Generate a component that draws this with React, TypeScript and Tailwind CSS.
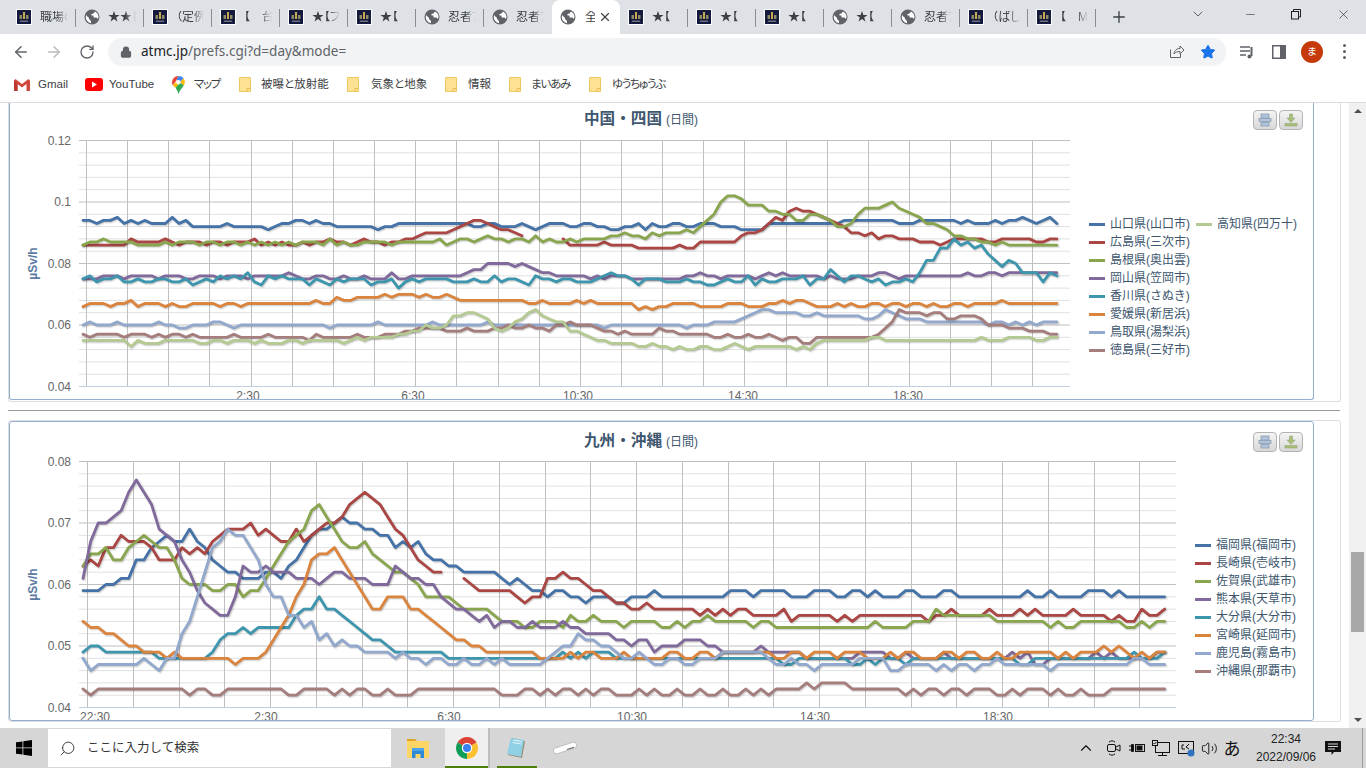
import {
  ArrowLeft,
  ArrowRight,
  RotateCw,
  Lock,
  Star,
  Minus,
  X,
  Plus,
  ChevronDown,
  ChevronUp,
  Search,
  Volume2,
} from 'lucide-react'

const colors = ['#4572A7', '#AA4643', '#89A54E', '#80699B', '#3D96AE', '#DB843D', '#92A8CD', '#A47D7C', '#B5CA92']

// values are in 0.001 uSv/h, one per 10 minutes from 22:30, 0 = no data
const shikoku = [
  [
    94,94,93,94,94,95,93,94,93,94,93,93,93,95,93,94,92,92,92,92,
    92,93,92,92,92,92,92,91,92,93,93,94,94,93,94,93,93,92,92,92,
    92,92,92,91,92,92,93,93,93,93,93,93,93,93,93,93,93,92,92,93,
    93,92,92,92,93,92,91,92,93,93,93,92,92,93,93,92,92,91,91,92,
    92,93,91,93,92,92,93,93,92,92,93,93,93,92,92,92,91,91,91,91,
    93,93,93,93,93,93,93,93,93,93,93,94,94,94,94,94,94,94,94,93,
    93,93,94,94,94,94,94,94,93,94,93,93,93,94,93,94,94,95,94,93,94,95,93,
  ],
  [
    86,86,86,86,86,86,86,88,87,87,87,87,88,87,86,87,87,87,86,87,
    87,86,87,87,87,88,86,87,86,87,86,86,87,86,87,87,88,87,87,86,
    87,88,87,87,86,87,87,88,88,89,90,90,90,90,91,92,93,94,94,93,
    92,91,91,90,89,0,0,0,0,0,88,86,86,86,86,86,87,86,86,86,
    86,85,85,85,85,85,85,86,85,85,87,87,87,87,87,87,89,90,90,91,
    93,95,94,97,98,97,97,96,95,94,93,92,90,90,89,90,88,89,89,88,
    88,88,87,87,87,86,87,88,88,88,88,88,87,87,88,88,88,88,88,87,87,88,88,
  ],
  [
    86,87,87,88,87,87,87,87,86,86,86,86,87,86,87,87,87,86,87,87,
    86,87,87,86,87,86,87,86,87,86,87,86,87,87,87,86,88,86,87,86,
    86,87,87,87,87,86,87,87,87,87,87,87,88,86,87,88,88,87,88,89,
    88,88,87,88,88,87,89,87,88,87,87,88,87,88,88,88,88,89,89,90,
    89,89,88,90,89,90,90,90,91,90,92,94,96,100,102,102,101,99,99,99,
    97,97,96,96,94,94,96,96,95,94,92,92,93,96,98,98,98,99,100,98,
    97,96,95,93,93,92,91,89,89,88,88,87,87,86,87,86,86,86,86,86,86,86,86,
  ],
  [
    75,75,75,76,76,76,75,76,76,76,76,75,76,76,76,75,75,76,76,76,
    75,76,76,76,75,76,76,76,76,76,77,76,75,75,76,76,75,75,76,75,
    75,76,75,75,75,77,75,75,76,76,76,76,76,76,76,76,77,78,78,80,
    80,80,80,79,80,79,78,77,77,76,76,76,76,76,75,76,75,76,76,76,
    75,75,75,75,75,75,75,75,76,76,77,76,76,75,76,76,76,76,75,76,
    77,76,77,76,76,76,76,76,75,76,75,75,75,76,76,76,77,77,76,75,
    76,76,76,76,76,76,76,76,76,77,76,76,77,77,76,77,77,77,77,77,77,77,77,
  ],
  [
    75,76,74,75,75,76,74,74,75,74,74,75,75,74,74,75,73,74,75,74,
    76,75,76,75,77,74,73,76,75,76,75,75,75,73,75,74,73,75,74,75,
    75,75,73,74,74,75,72,74,75,74,75,75,75,75,74,74,74,75,74,74,
    76,74,75,75,74,73,76,75,75,74,75,75,74,74,74,75,76,77,76,76,
    75,73,75,75,75,74,74,74,75,74,74,73,73,74,75,74,74,76,73,75,
    74,74,75,75,75,76,73,75,75,78,76,74,76,76,75,74,75,73,74,74,
    75,74,77,81,81,85,85,88,86,87,85,86,83,81,79,81,80,77,77,77,74,77,76,
  ],
  [
    66,67,67,67,66,67,67,68,66,67,67,67,66,67,66,66,67,67,67,67,
    66,67,67,66,67,67,67,67,67,67,67,67,67,67,68,67,67,69,68,68,
    69,69,69,69,70,69,70,70,70,69,70,69,69,70,69,68,68,68,68,68,
    68,68,68,68,68,67,67,68,67,67,67,67,68,67,68,67,67,67,67,67,
    67,65,66,65,66,66,67,67,67,67,66,66,66,66,67,67,67,66,66,66,
    67,67,68,67,68,68,67,66,66,66,67,66,67,66,66,67,67,66,67,67,
    66,67,67,66,67,66,66,67,67,66,67,67,67,67,68,67,67,67,67,67,67,67,67,
  ],
  [
    60,61,60,60,60,61,60,60,60,60,60,61,60,60,59,59,60,60,60,61,
    61,60,59,60,60,60,60,60,60,60,60,60,60,60,60,60,59,60,60,60,
    60,60,60,61,60,60,60,60,60,60,60,61,60,60,60,60,60,60,60,61,
    60,60,60,60,60,60,60,60,60,60,60,60,60,60,60,60,59,60,60,60,
    60,60,60,60,60,60,60,60,59,60,60,60,61,61,61,61,62,63,64,65,
    65,64,64,64,64,63,63,64,63,63,63,63,63,63,62,62,63,65,64,63,
    62,62,62,61,61,61,61,61,61,61,61,61,60,61,61,60,61,60,61,60,61,61,61,
  ],
  [
    57,56,57,57,57,57,56,57,57,57,56,57,56,57,57,56,57,56,56,56,
    56,56,57,56,56,56,56,57,56,56,56,56,56,55,57,56,56,56,56,56,
    57,56,56,56,57,57,57,58,58,59,59,59,59,58,58,58,59,58,58,58,
    59,59,60,59,59,60,59,59,58,60,60,61,60,60,60,59,58,58,57,58,
    57,57,57,57,59,58,58,57,57,57,57,57,56,56,57,56,56,57,56,56,
    57,56,55,56,56,54,54,56,56,56,56,56,56,56,56,56,57,59,61,65,
    64,64,64,63,64,64,62,62,63,63,63,62,60,60,60,59,59,59,58,58,58,57,57,
  ],
  [
    55,55,55,55,55,55,55,53,55,54,54,54,55,55,55,55,55,54,54,55,
    55,54,55,55,55,54,55,54,54,54,55,55,54,55,55,55,55,55,54,55,
    56,55,56,56,56,56,57,57,58,58,60,59,59,60,63,63,64,64,63,62,
    59,58,59,61,62,64,65,63,62,61,61,58,58,57,56,55,55,54,54,54,
    54,53,53,54,53,53,52,53,52,52,53,53,52,52,53,54,53,52,53,53,
    53,53,53,53,52,53,52,54,55,55,55,55,55,55,55,56,56,55,55,55,
    55,55,55,55,55,55,55,55,55,55,55,56,55,55,55,56,56,56,56,55,55,56,56,
  ],
]

const kyushu = [
  [
    59,59,59,60,60,61,61,64,64,66,67,68,67,67,69,67,66,64,63,62,
    62,61,61,61,62,62,61,63,64,66,68,69,69,70,71,70,70,69,69,68,
    68,66,67,66,67,65,64,64,63,63,62,62,62,62,62,61,60,61,60,59,
    59,58,59,59,58,58,57,58,58,58,57,57,58,58,58,59,58,58,58,58,
    58,58,58,58,58,59,59,59,58,59,59,59,59,58,58,58,59,59,59,58,
    58,59,59,58,59,58,58,58,59,59,58,58,58,59,59,58,58,58,58,58,
    58,58,58,58,59,58,58,59,58,58,58,58,59,59,59,58,59,58,58,58,58,58,58,
  ],
  [
    63,64,63,66,66,68,67,67,67,66,64,64,64,66,65,66,65,67,68,69,
    69,69,70,68,69,68,67,67,69,67,68,69,70,70,71,73,74,75,74,73,
    71,69,68,66,64,63,62,62,0,0,61,60,59,59,59,59,59,58,57,58,
    58,61,61,62,61,61,60,59,59,58,57,57,56,56,57,56,56,56,56,56,
    56,55,56,55,56,55,56,56,55,55,55,55,56,54,55,55,55,55,55,54,
    55,54,55,55,55,55,55,55,55,55,55,54,55,55,56,55,55,55,55,56,
    55,55,55,56,55,56,55,55,55,55,56,55,55,55,55,54,55,54,54,56,55,55,56,
  ],
  [
    63,65,65,66,64,64,66,67,68,67,66,66,64,61,60,60,60,59,59,60,
    60,58,59,59,61,63,65,67,68,69,72,73,71,69,67,66,66,67,65,64,
    63,62,62,61,60,58,58,58,58,57,56,56,56,56,55,54,54,54,53,53,
    54,54,54,53,55,54,54,55,54,54,54,53,54,54,54,54,53,53,54,53,
    54,54,55,54,54,54,54,54,53,54,54,53,53,53,53,53,53,53,53,53,
    53,53,53,53,54,53,53,53,53,54,54,54,56,55,55,55,55,55,55,55,
    54,54,54,54,54,54,54,53,54,53,53,54,54,54,54,54,54,53,53,54,53,54,54,
  ],
  [
    61,67,70,70,71,72,75,77,75,73,69,68,67,64,62,59,57,56,55,55,
    58,63,62,62,63,62,62,62,61,61,61,60,61,62,62,61,61,61,60,60,
    60,63,62,61,61,60,60,58,57,56,56,55,54,55,53,54,54,53,53,54,
    53,53,53,54,53,53,52,52,52,52,51,51,50,51,51,49,50,50,50,51,
    51,51,50,50,49,49,49,49,49,50,49,49,49,49,49,48,48,48,48,48,
    48,48,49,49,49,49,48,48,49,48,48,48,48,49,48,48,48,48,48,48,
    48,48,49,48,49,47,47,48,48,48,48,48,48,49,48,49,48,48,48,48,48,49,49,
  ],
  [
    49,50,50,49,49,49,49,49,49,49,48,48,48,48,48,48,48,49,51,52,
    52,53,52,53,53,53,53,53,55,56,56,58,56,56,55,54,53,52,51,51,
    50,49,49,49,49,49,49,49,48,48,48,48,48,48,48,48,48,48,48,48,
    48,48,48,49,48,49,48,49,49,49,48,48,48,48,48,48,48,48,48,48,
    48,48,48,48,48,48,48,48,48,48,48,48,47,47,48,48,48,48,48,48,
    48,47,47,48,47,48,48,48,47,48,48,48,48,48,48,48,48,48,48,48,
    48,48,48,47,47,48,48,48,48,48,48,48,48,48,48,48,48,48,49,48,48,48,49,
  ],
  [
    54,53,53,52,52,51,50,50,49,49,49,48,49,48,48,48,48,48,48,48,
    47,48,48,48,49,51,53,55,58,60,64,65,65,66,64,62,60,58,56,56,
    58,58,58,56,56,55,54,53,52,51,51,50,50,49,49,49,49,49,49,49,
    48,48,48,48,49,48,49,49,48,48,48,49,48,48,48,48,48,49,49,48,
    48,49,49,48,49,49,49,49,49,49,49,48,48,49,49,48,49,49,49,48,
    49,49,49,48,48,48,49,48,49,49,48,48,48,49,49,48,49,49,48,48,
    49,48,48,49,49,49,49,49,48,49,48,49,49,49,50,49,50,49,48,49,48,49,49,
  ],
  [
    48,46,47,47,47,47,47,47,48,47,46,48,48,52,54,58,62,66,67,69,
    68,68,66,64,60,58,58,55,55,53,54,51,52,50,51,50,50,49,49,49,
    49,48,49,48,48,47,48,48,47,47,48,47,47,48,47,48,47,47,47,47,
    47,48,49,50,50,52,51,51,50,50,49,48,48,49,48,47,47,48,48,47,
    47,48,48,48,49,49,49,49,49,49,48,47,47,48,47,47,46,47,47,47,
    47,47,48,48,48,48,46,46,47,47,47,47,46,47,46,47,47,46,47,47,
    48,47,47,47,47,47,47,46,47,47,47,47,47,47,47,47,47,47,48,48,47,47,47,
  ],
  [
    43,42,43,43,43,43,43,43,43,43,43,43,43,43,42,43,43,42,42,43,
    43,43,43,43,43,43,43,42,42,43,43,43,43,42,43,42,43,43,42,42,
    43,42,42,42,43,43,43,43,43,43,43,43,43,43,43,42,42,42,43,43,
    42,43,42,43,43,42,43,42,43,43,42,42,42,43,42,43,42,42,43,42,
    42,43,42,42,43,42,42,43,42,43,42,43,43,43,43,44,43,44,44,44,
    44,43,43,43,43,43,43,43,42,43,42,43,43,42,43,43,42,43,43,43,
    42,42,43,42,43,43,43,42,43,42,42,43,42,42,42,43,43,43,43,43,43,43,43,
  ],
]

type ChartProps = {
  series: number[][]
  box: [number, number, number, number]
  left: number
  right: number
  top: number
  bottom: number
  firstX: number
  stepX: number
  firstGrid: number
  hour: number
  gridCount: number
  yLabels: string[]
  minV: number
  maxV: number
  timeLabels: [string, number][]
  labelY: number
}

function toPaths(values: number[], x: (i: number) => number, y: (v: number) => number) {
  const parts: string[] = []
  let cur = ''
  values.forEach((v, i) => {
    if (!v) {
      if (cur) parts.push(cur)
      cur = ''
      return
    }
    cur += `${cur ? 'L' : 'M'}${x(i).toFixed(1)} ${y(v).toFixed(1)}`
  })
  if (cur) parts.push(cur)
  return parts.join('')
}

function Chart(p: ChartProps) {
  const [bx, by, bw, bh] = p.box
  const x = (i: number) => p.firstX + i * p.stepX
  const y = (v: number) => p.bottom - ((v - p.minV) / (p.maxV - p.minV)) * (p.bottom - p.top)
  const majors = p.yLabels.length - 1
  const rowH = (p.bottom - p.top) / majors
  const minorLines: number[] = []
  for (let m = 0; m < majors; m++) {
    for (let k = 1; k < 5; k++) minorLines.push(p.top + m * rowH + (k * rowH) / 5)
  }
  return (
    <svg width={bw} height={bh} viewBox={`${bx} ${by} ${bw} ${bh}`} className="shrink-0 block">
      {minorLines.map((l) => (
        <line key={l} x1={p.left} x2={p.right} y1={l} y2={l} stroke="#e0e0e0" strokeWidth="1" />
      ))}
      {p.yLabels.map((_, m) => (
        <line
          key={m}
          x1={p.left}
          x2={p.right}
          y1={p.top + m * rowH}
          y2={p.top + m * rowH}
          stroke={m === majors ? '#c0d0e0' : '#c0c0c0'}
          strokeWidth="1"
        />
      ))}
      {Array.from({ length: p.gridCount }).map((_, i) => {
        const gx = Math.round(p.firstGrid + i * p.hour) + 0.5
        return <line key={i} x1={gx} x2={gx} y1={p.top} y2={p.bottom} stroke="#c0c0c0" strokeWidth="1" />
      })}
      {p.series.map((values, s) => {
        const d = toPaths(values, x, y)
        return (
          <g key={s} fill="none" strokeLinejoin="round" strokeLinecap="round">
            <path d={d} stroke="#000" strokeOpacity="0.05" strokeWidth="5" transform="translate(1 1)" />
            <path d={d} stroke="#000" strokeOpacity="0.1" strokeWidth="3" transform="translate(1 1)" />
            <path d={d} stroke="#000" strokeOpacity="0.15" strokeWidth="1" transform="translate(1 1)" />
            <path d={d} stroke={colors[s]} strokeWidth="2.8" />
          </g>
        )
      })}
      {p.yLabels.map((label, m) => (
        <text key={label} x="71" y={p.top + m * rowH + 4} textAnchor="end" fontSize="12" fill="#666666">
          {label}
        </text>
      ))}
      {p.timeLabels.map(([label, lx]) => (
        <text key={label} x={lx} y={p.labelY} textAnchor="middle" fontSize="12" fill="#666666">
          {label}
        </text>
      ))}
      <text
        x="37"
        y={(p.top + p.bottom) / 2}
        textAnchor="middle"
        fontSize="12"
        fontWeight="bold"
        fill="#5b7ba3"
        transform={`rotate(-90 37 ${(p.top + p.bottom) / 2})`}
      >
        µSv/h
      </text>
    </svg>
  )
}

function ChartButtons() {
  return (
    <div className="flex gap-[2px]">
      <div className="w-[24px] h-[20px] rounded-[4px] border border-[#b4b4b4] bg-gradient-to-b from-[#f4f4f4] to-[#d8d8d8] flex items-center justify-center">
        <svg width="14" height="14" viewBox="0 0 14 14">
          <rect x="3" y="1" width="8" height="4" fill="#b0c4de" stroke="#8e9db0" strokeWidth="0.8" />
          <rect x="1" y="5.5" width="12" height="3" fill="#b0c4de" stroke="#8e9db0" strokeWidth="0.8" />
          <rect x="3" y="9.5" width="8" height="3.5" fill="#b0c4de" stroke="#8e9db0" strokeWidth="0.8" />
        </svg>
      </div>
      <div className="w-[24px] h-[20px] rounded-[4px] border border-[#b4b4b4] bg-gradient-to-b from-[#f4f4f4] to-[#d8d8d8] flex items-center justify-center">
        <svg width="14" height="14" viewBox="0 0 14 14">
          <path d="M5.5 1h3v4h2.5L7 9.5 3 5h2.5z" fill="#a8bf77" stroke="#8f9f6d" strokeWidth="0.5" />
          <rect x="1" y="10.5" width="12" height="2.5" fill="#a8bf77" stroke="#8f9f6d" strokeWidth="0.5" />
        </svg>
      </div>
    </div>
  )
}

function LegendItem({ color, label }: { color: string; label: string }) {
  return (
    <div className="flex items-center h-[18px] text-[12px] text-[#3e576f] whitespace-nowrap">
      <span className="w-[16px] h-[3px] mr-[5px]" style={{ background: color }} />
      {label}
    </div>
  )
}

function ChartTitle({ name }: { name: string }) {
  return (
    <div className="flex items-center h-[20px] -mt-[1px]">
      <span className="text-[15.6px] font-bold text-[#3e576f]">{name}</span>
      <span className="text-[12px] text-[#3e576f] ml-[4px] mt-[2px]">(日間)</span>
    </div>
  )
}

const shikokuLegend = ['山口県(山口市)', '広島県(三次市)', '島根県(奥出雲)', '岡山県(笠岡市)', '香川県(さぬき)', '愛媛県(新居浜)', '鳥取県(湯梨浜)', '徳島県(三好市)']
const kyushuLegend = ['福岡県(福岡市)', '長崎県(壱岐市)', '佐賀県(武雄市)', '熊本県(天草市)', '大分県(大分市)', '宮崎県(延岡市)', '鹿児島(霧島市)', '沖縄県(那覇市)']

function Favicon() {
  return (
    <svg width="16" height="16" viewBox="0 0 16 16" className="shrink-0">
      <rect width="16" height="16" fill="#fff" />
      <rect x="1" y="1" width="14" height="14" fill="#141a3c" />
      <rect x="7" y="3" width="2" height="7" fill="#c8a850" />
      <rect x="3.5" y="6" width="2.5" height="4" fill="#8f8a68" />
      <rect x="10" y="6" width="2.5" height="4" fill="#8f8a68" />
      <rect x="4" y="11.5" width="8" height="1.5" fill="#6d6f80" />
    </svg>
  )
}

function Globe() {
  return (
    <svg width="16" height="16" viewBox="0 0 16 16" className="shrink-0">
      <circle cx="8" cy="8" r="7.5" fill="#5f6368" />
      <path d="M2 6l3 3v1l2 2v2.2A6.5 6.5 0 0 1 2 6zM11 2.5A6.3 6.3 0 0 1 14 10l-1.5-1.500H9.500V6.500H7.500V5l2-.5z" fill="#ffffff" />
    </svg>
  )
}

type Tab = { icon: 'site' | 'globe'; title: string }

const tabsBefore: Tab[] = [
  { icon: 'site', title: '職場の' },
  { icon: 'globe', title: '★★【' },
  { icon: 'site', title: '（定例' },
  { icon: 'site', title: '【　台' },
  { icon: 'site', title: '★【フ' },
  { icon: 'site', title: '★【' },
  { icon: 'globe', title: '忍者ブ' },
  { icon: 'globe', title: '忍者ブ' },
]
const tabsAfter: Tab[] = [
  { icon: 'site', title: '★【' },
  { icon: 'site', title: '★【' },
  { icon: 'site', title: '★【' },
  { icon: 'globe', title: '★【' },
  { icon: 'globe', title: '忍者ブ' },
  { icon: 'site', title: '（ばし' },
  { icon: 'site', title: '【　M' },
]

function TabItem({ tab, last }: { tab: Tab; last: boolean }) {
  return (
    <div className="w-[68px] h-[34px] flex items-center pl-[8px] shrink-0 relative">
      {tab.icon === 'site' ? <Favicon /> : <Globe />}
      <div className="ml-[8px] w-[28px] overflow-hidden whitespace-nowrap text-[12px] leading-none text-[#3c4043] [font-feature-settings:'palt'] [mask-image:linear-gradient(to_right,black_60%,transparent)]">
        {tab.title}
      </div>
      {!last && <span className="absolute right-0 top-[9px] w-px h-[18px] bg-[#8a8d91]" />}
    </div>
  )
}

function TabStrip() {
  return (
    <div className="h-[34px] bg-[#dee1e6] flex items-end pl-[8px]">
      {tabsBefore.map((t, i) => (
        <TabItem key={i} tab={t} last={i === tabsBefore.length - 1} />
      ))}
      <div className="w-[68px] h-[34px] bg-white rounded-t-[8px] flex items-center pl-[8px] shrink-0">
        <Globe />
        <div className="ml-[9px] w-[10px] overflow-hidden text-[12px] leading-none text-[#3c4043]">全</div>
        <X size={14} strokeWidth={2} className="ml-[3px] text-[#3c4043]" />
      </div>
      {tabsAfter.map((t, i) => (
        <TabItem key={i} tab={t} last={false} />
      ))}
      <Plus size={18} strokeWidth={1.8} className="ml-[14px] mb-[8px] text-[#3c4043]" />
      <div className="ml-auto flex items-center h-[28px] self-start text-[#1f1f1f]">
        <ChevronDown size={16} strokeWidth={1} className="mr-[38px]" />
        <Minus size={13} strokeWidth={1} className="mr-[33px]" />
        <svg width="12" height="12" viewBox="0 0 12 12" fill="none" stroke="#1f1f1f" className="mr-[34px]">
          <rect x="1.500" y="3.500" width="7" height="7.500" />
          <path d="M3.500 3.500V1.500h7v7.500H8.500" />
        </svg>
        <X size={15} strokeWidth={1} className="mr-[15px]" />
      </div>
    </div>
  )
}

function Toolbar() {
  return (
    <div className="h-[33px] pt-[2px] bg-white flex items-center">
      <ArrowLeft size={18} strokeWidth={2} className="ml-[12px] text-[#5f6368]" />
      <ArrowRight size={18} strokeWidth={2} className="ml-[15px] text-[#babcbe]" />
      <RotateCw size={16} strokeWidth={2} className="ml-[16px] text-[#5f6368]" />
      <div className="ml-[13px] w-[1118px] h-[28px] rounded-full bg-[#f1f3f4] flex items-center pl-[12px]">
        <Lock size={12} strokeWidth={2.5} fill="#5f6368" className="text-[#5f6368]" />
        <span className="ml-[9px] text-[13.5px] text-[#202124] [font-family:'Noto_Sans',sans-serif]">
          atmc.jp<span className="text-[#5f6368]">/prefs.cgi?d=day&amp;mode=</span>
        </span>
        <svg width="17" height="17" viewBox="0 0 17 17" fill="none" stroke="#5f6368" strokeWidth="1" className="ml-auto mr-[15px]">
          <path d="M2.500 6.500v8h10V11" />
          <path d="M6 11c.5-4 3-5.500 6-5.500V3l4 4-4 4V8.500C9.500 8.500 7.500 9 6 11z" />
        </svg>
        <Star size={16} fill="#1a73e8" strokeWidth={1.500} className="text-[#1a73e8] mr-[10px]" />
      </div>
      <svg width="16" height="16" viewBox="0 0 16 16" fill="none" stroke="#5f6368" strokeWidth="1.500" className="ml-[13px]">
        <path d="M1 3h10M1 7h10M1 11h6" />
        <path d="M12.500 3v9" strokeWidth="2" />
        <circle cx="10.500" cy="12.500" r="2" fill="#5f6368" stroke="none" />
      </svg>
      <svg width="14" height="14" viewBox="0 0 14 14" className="ml-[17px]">
        <rect x="0.750" y="0.750" width="12.500" height="12.500" fill="none" stroke="#5f6368" strokeWidth="1.500" />
        <rect x="8" y="1" width="5" height="12" fill="#5f6368" />
      </svg>
      <div className="ml-[15px] w-[22px] h-[22px] rounded-full bg-[#c5390b] text-white text-[10px] flex items-center justify-center">ま</div>
      <div className="ml-[20px] flex flex-col gap-[3px]">
        <span className="w-[3px] h-[3px] rounded-full bg-[#5f6368]" />
        <span className="w-[3px] h-[3px] rounded-full bg-[#5f6368]" />
        <span className="w-[3px] h-[3px] rounded-full bg-[#5f6368]" />
      </div>
    </div>
  )
}

function Folder({ className }: { className: string }) {
  return (
    <svg width="12" height="15" viewBox="0 0 12 15" className={className}>
      <path d="M.5.500h11v14H.5z" fill="#fde293" stroke="#f0c860" />
      <path d="M8 14.500v-3h3.500" fill="none" stroke="#e8bc50" />
    </svg>
  )
}

function BookmarkBar() {
  return (
    <div className="h-[35px] bg-white border-b border-[#dadce0] flex items-center text-[11.5px] text-[#3c4043] box-content [font-feature-settings:'palt']">
      <svg width="16" height="12" viewBox="0 0 16 12" className="ml-[14px]">
        <path d="M0 1.500V12h3.500V5L8 8.500 12.500 5v7H16V1.500L14.500 0 8 5 1.500 0z" fill="#d1483c" />
        <path d="M3.500 5v7H0V1.500z" fill="#b9382e" />
      </svg>
      <span className="ml-[8px] w-[31px]">Gmail</span>
      <svg width="18" height="13" viewBox="0 0 18 13" className="ml-[16px]">
        <rect width="18" height="13" rx="3" fill="#f00" />
        <path d="M7 3.500v6l5-3z" fill="#fff" />
      </svg>
      <span className="ml-[6px] w-[45px]">YouTube</span>
      <svg width="13" height="18" viewBox="0 0 13 18" className="ml-[18px]">
        <path d="M6.500 0A6.500 6.500 0 0 0 .8 9.500L4 5z" fill="#ea4335" />
        <path d="M6.500 0c2 0 3.800.9 5 2.300L8 6.500 4.500 4z" fill="#4285f4" />
        <path d="M11.500 2.300A6.500 6.500 0 0 1 11.800 9.500L8 6.500z" fill="#fbbc04" />
        <path d="M.8 9.500 4.800 5.200l3.500 1.500-4.500 5z" fill="#fbbc04" />
        <path d="M11.800 9.500C10 12.500 7.500 14 6.500 18c-.8-3-2-4.500-3-6.200L8 6.500z" fill="#34a853" />
        <circle cx="6.500" cy="6.300" r="2.200" fill="#fff" />
      </svg>
      <span className="ml-[9px] w-[26px] whitespace-nowrap tracking-[-1.300px]">マップ</span>
      <Folder className="ml-[19px]" />
      <span className="ml-[10px] w-[68px] whitespace-nowrap">被曝と放射能</span>
      <Folder className="ml-[18px]" />
      <span className="ml-[12px] w-[55px] whitespace-nowrap">気象と地象</span>
      <Folder className="ml-[19px]" />
      <span className="ml-[11px] w-[23px] whitespace-nowrap">情報</span>
      <Folder className="ml-[18px]" />
      <span className="ml-[10px] w-[39px] whitespace-nowrap tracking-[-1.200px]">まいあみ</span>
      <Folder className="ml-[19px]" />
      <span className="ml-[11px] whitespace-nowrap tracking-[-1.300px]">ゆうちゅうぶ</span>
    </div>
  )
}

function Taskbar() {
  return (
    <div className="h-[40px] bg-[#d6d6d6] flex items-stretch relative">
      <div className="w-[48px] flex items-center justify-center">
        <svg width="16" height="16" viewBox="0 0 16 16" fill="#000">
          <path d="M0 2.300 6.500 1.400V7.500H0zM7.300 1.300 16 0v7.500H7.300zM0 8.300h6.500v6.300L0 13.700zM7.300 8.300H16V16L7.300 14.700z" />
        </svg>
      </div>
      <div className="w-[343px] my-[1px] bg-white flex items-center pl-[11px] text-[12.500px] text-[#333]">
        <Search size={17} strokeWidth={1.2} className="text-[#222] -scale-x-100" />
        <span className="ml-[11px]">ここに入力して検索</span>
      </div>
      <div className="w-[54px] flex items-center justify-center">
        <svg width="22" height="20" viewBox="0 0 22 20">
          <path d="M0 1h8l2 2h-10z" fill="#e0a526" />
          <rect y="3" width="22" height="17" fill="#fbd667" />
          <path d="M5 12h12v8h-3.500v-4h-5v4H5z" fill="#2f88d8" />
          <rect x="5" y="10" width="12" height="3" fill="#4aa3e8" />
        </svg>
      </div>
      <div className="w-[45px] pl-[1px] bg-[#efefef] border-r-2 border-[#bdbdbd] flex items-center justify-center relative">
        <svg width="24" height="24" viewBox="0 0 48 48">
          <path d="M24 24 4.950 13A22 22 0 0 1 43.050 13z" fill="#db4437" />
          <path d="M24 24 43.050 13A22 22 0 0 1 24 46z" fill="#fbc02d" />
          <path d="M24 24V46A22 22 0 0 1 4.950 13z" fill="#0f9d58" />
          <circle cx="24" cy="24" r="10.500" fill="#fff" />
          <circle cx="24" cy="24" r="8" fill="#3b82f0" />
        </svg>
        <span className="absolute bottom-0 left-0 right-0 h-[2px] bg-[#4e7f0a]" />
      </div>
      <div className="ml-[7px] w-[40px] flex items-center justify-center relative">
        <svg width="24" height="24" viewBox="0 0 24 24">
          <path d="M7 2l13 3-3 17L3 19z" fill="#9a8a70" />
          <path d="M6 2l13 2-3 17L2 18z" fill="#8fd0e4" />
          <path d="M8 4l9 1.500M7.500 6.500l9 1.500" stroke="#ffffff" strokeWidth="0.800" />
        </svg>
        <span className="absolute bottom-0 left-0 right-0 h-[2px] bg-[#4e7f0a]" />
      </div>
      <div className="ml-[8px] w-[40px] flex items-center justify-center">
        <svg width="26" height="14" viewBox="0 0 26 14">
          <rect x="1" y="4" width="24" height="6" rx="3" fill="#ffffff" stroke="#999" strokeWidth="0.500" transform="rotate(-18 13 7)" />
          <path d="M15 8.500l7-2.300" stroke="#666" strokeWidth="1.200" />
        </svg>
      </div>
      <div className="ml-auto flex items-center text-[#111]">
        <ChevronUp size={18} strokeWidth={1.5} className="mr-[11px]" />
        <svg width="16" height="18" viewBox="0 0 16 18" fill="none" stroke="#111" strokeWidth="1" className="mr-[6px]">
          <path d="M3 3c2-1.500 4-1.500 6 0M3 15c2 1.500 4 1.500 6 0" />
          <rect x="1.500" y="5.500" width="8" height="7" rx="1.500" />
          <path d="M10 8l4-2v6l-4-2" />
        </svg>
        <svg width="18" height="14" viewBox="0 0 18 14" className="mr-[6px]">
          <path d="M1 5h4M1 9h4" stroke="#111" />
          <rect x="3" y="3" width="3" height="8" rx="1" fill="#111" />
          <rect x="7.500" y="3.500" width="9" height="7" fill="none" stroke="#111" />
          <rect x="8.500" y="4.500" width="6" height="5" fill="#111" />
        </svg>
        <svg width="18" height="17" viewBox="0 0 18 17" fill="none" stroke="#111" className="mr-[7px]">
          <rect x="3.500" y="2.500" width="14" height="10" />
          <path d="M6 15.500h9M10.500 12.500v3" />
          <rect x="0.500" y="0.500" width="5" height="5" fill="#d6d6d6" />
          <path d="M1.500 3l1 1 2-2" />
        </svg>
        <svg width="18" height="18" viewBox="0 0 18 18" className="mr-[6px]" fill="none">
          <rect x="1.500" y="2.500" width="15" height="12" stroke="#111" />
          <path d="M7 6H5v4h3M12 5l-3 3 3 2" stroke="#111" />
          <circle cx="14" cy="14" r="3.500" fill="#2f74c0" />
        </svg>
        <Volume2 size={17} strokeWidth={1.3} className="mr-[4px]" />
        <span className="text-[17px] w-[20px] text-center mr-[6px] [font-family:'Noto_Sans_CJK_JP',sans-serif]">あ</span>
        <div className="w-[76px] flex flex-col items-center text-[12px] leading-[18px] text-[#222] mr-[1px]">
          <span>22:34</span>
          <span>2022/09/06</span>
        </div>
        <svg width="16" height="16" viewBox="0 0 16 16" className="mr-[25px]">
          <path d="M0 1h16v11H9l-2.500 3v-3H0z" fill="#111" />
          <path d="M3 4h10M3 6.500h10M3 9h7" stroke="#d6d6d6" />
        </svg>
        <span className="absolute right-[3px] top-0 h-full w-px bg-[#9a9a9a]" />
      </div>
    </div>
  )
}

export default function App() {
  return (
    <div className="w-[1366px] h-[768px] overflow-hidden bg-white flex flex-col [font-family:'Liberation_Sans','Noto_Sans_CJK_JP',sans-serif]">
      <TabStrip />
      <Toolbar />
      <BookmarkBar />
      <div className="h-[625px] flex overflow-hidden">
        <div className="w-[1349px] pl-[8px]">
          {/* upper panel, scrolled so its top is cut off */}
          <div className="w-[1333px] h-[299px] border border-t-0 border-[#dddddd] rounded-b-[3px]">
            <div className="w-[1305px] h-[297px] border border-t-0 border-[#92aed0] rounded-b-[3px] flex flex-col">
              <div className="h-[31px] shrink-0 flex pt-[7px] pl-[574px] pr-[10px]">
                <ChartTitle name="中国・四国" />
                <div className="ml-auto">
                  <ChartButtons />
                </div>
              </div>
              <div className="flex">
                <Chart
                  series={shikoku}
                  box={[10, 134, 1075, 265]}
                  left={79}
                  right={1070}
                  top={140.5}
                  bottom={386.5}
                  firstX={83}
                  stepX={6.858}
                  firstGrid={86}
                  hour={41.15}
                  gridCount={24}
                  yLabels={['0.12', '0.1', '0.08', '0.06', '0.04']}
                  minV={40}
                  maxV={120}
                  timeLabels={[['2:30', 248], ['6:30', 413], ['10:30', 578], ['14:30', 743], ['18:30', 908]]}
                  labelY={400}
                />
                <div className="flex pt-[81px] pl-[4px]">
                  <div className="flex flex-col">
                    {shikokuLegend.map((l, i) => (
                      <LegendItem key={l} color={colors[i]} label={l} />
                    ))}
                  </div>
                  <div className="ml-[6px]">
                    <LegendItem color={colors[8]} label="高知県(四万十)" />
                  </div>
                </div>
              </div>
            </div>
          </div>
          <div className="h-[1px] w-[1332px] bg-[#999999] mt-[8px] mb-[9px]" />
          {/* lower panel */}
          <div className="w-[1333px] h-[302px] border border-[#dddddd] rounded-[3px]">
            <div className="w-[1305px] h-[300px] border border-[#92aed0] rounded-[3px] flex flex-col">
              <div className="h-[30px] shrink-0 flex pt-[10px] pl-[574px] pr-[10px]">
                <ChartTitle name="九州・沖縄" />
                <div className="ml-auto">
                  <ChartButtons />
                </div>
              </div>
              <div className="flex">
                <Chart
                  series={kyushu}
                  box={[10, 452, 1175, 268]}
                  left={79}
                  right={1176}
                  top={461.5}
                  bottom={707.5}
                  firstX={83}
                  stepX={7.617}
                  firstGrid={87}
                  hour={45.75}
                  gridCount={24}
                  yLabels={['0.08', '0.07', '0.06', '0.05', '0.04']}
                  minV={40}
                  maxV={80}
                  timeLabels={[['22:30', 95], ['2:30', 266], ['6:30', 449], ['10:30', 632], ['14:30', 815], ['18:30', 998]]}
                  labelY={721}
                />
                <div className="flex flex-col pt-[84px] pl-[10px]">
                  {kyushuLegend.map((l, i) => (
                    <LegendItem key={l} color={colors[i]} label={l} />
                  ))}
                </div>
              </div>
            </div>
          </div>
        </div>
        <div className="w-[17px] bg-[#f1f1f1] flex flex-col items-center justify-between py-[6px] relative">
          <span className="w-0 h-0 border-x-[4px] border-x-transparent border-b-[4px] border-b-[#505050]" />
          <span className="absolute left-[2px] top-[449px] w-[13px] h-[80px] bg-[#a8a8a8]" />
          <span className="w-0 h-0 border-x-[4px] border-x-transparent border-t-[4px] border-t-[#505050]" />
        </div>
      </div>
      <Taskbar />
    </div>
  )
}
